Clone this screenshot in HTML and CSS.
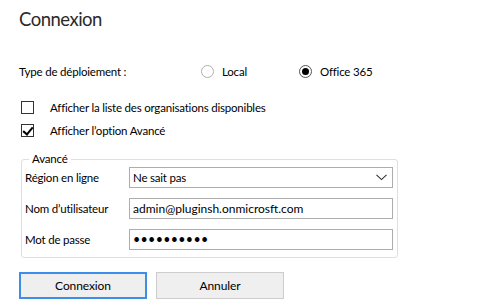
FILE: index.html
```html
<!DOCTYPE html>
<html lang="fr">
<head>
    <meta charset="UTF-8">
    <title>Connexion</title>
    <link rel="stylesheet" href="styles.css">
</head>
<body>
    <div class="dialog">
        <h1 class="title">Connexion</h1>

        <div class="deploy-row">
            <span class="deploy-label">Type de déploiement :</span>
            <label class="radio"><input type="radio" name="deploy"><span>Local</span></label>
            <label class="radio"><input type="radio" name="deploy" checked><span>Office 365</span></label>
        </div>

        <label class="check"><input type="checkbox"><span>Afficher la liste des organisations disponibles</span></label>
        <label class="check"><input type="checkbox" checked><span>Afficher l’option Avancé</span></label>

        <fieldset class="advanced">
            <legend>Avancé</legend>
            <div class="field">
                <label>Région en ligne</label>
                <div class="select-box">
                    <span>Ne sait pas</span>
                    <svg width="11" height="7" viewBox="0 0 11 7"><path d="M0.5 0.8 L5.5 5.6 L10.5 0.8" fill="none" stroke="#333" stroke-width="1.1"/></svg>
                </div>
            </div>
            <div class="field">
                <label>Nom d’utilisateur</label>
                <input type="text" class="user" value="admin@pluginsh.onmicrosft.com">
            </div>
            <div class="field">
                <label>Mot de passe</label>
                <input type="password" class="pass" value="aaaaaaaaaa">
            </div>
        </fieldset>

        <div class="button-group">
            <button class="btn btn-primary">Connexion</button>
            <button class="btn">Annuler</button>
        </div>
    </div>
</body>
</html>
```

FILE: styles.css
```css
* {
    margin: 0;
    padding: 0;
    box-sizing: border-box;
}

body {
    background: #ffffff;
    font-family: 'Lato', 'Noto Sans', sans-serif;
    font-size: 11.5px;
    letter-spacing: -0.2px;
    color: #000;
}

.dialog {
    padding: 7px 0 0 19px;
    width: 488px;
}

.title {
    font-size: 18.5px;
    font-weight: 400;
    letter-spacing: -0.5px;
    color: #2a2a2a;
    line-height: 24px;
    height: 24px;
}

.deploy-row {
    display: grid;
    grid-template-columns: 182px 98px auto;
    align-items: center;
    margin-top: 31px;
    height: 18px;
}

.radio, .check {
    display: flex;
    align-items: center;
    cursor: pointer;
}

.radio input {
    appearance: none;
    width: 13px;
    height: 13px;
    border: 1px solid #b0b0b0;
    border-radius: 50%;
    margin-right: 8px;
    display: grid;
    place-items: center;
    background: #fff;
}

.radio input:checked {
    border-color: #555;
}

.radio input:checked::after {
    content: '';
    width: 7px;
    height: 7px;
    border-radius: 50%;
    background: #000;
}

.check {
    height: 18px;
    margin-left: 2px;
}

.check:first-of-type {
    margin-top: 18px;
}

.check + .check {
    margin-top: 5px;
}

.check input {
    appearance: none;
    width: 13px;
    height: 13px;
    border: 1px solid #333;
    background: #fff;
    margin-right: 16px;
    position: relative;
}

.check input:checked::after {
    content: '';
    position: absolute;
    left: 3px;
    top: 0px;
    width: 4px;
    height: 8px;
    border: solid #000;
    border-width: 0 2px 2px 0;
    transform: rotate(40deg);
}

.advanced {
    margin: 13px 0 0 2px;
    width: 376px;
    border: 1px solid #d9e0e6;
    border-radius: 3px;
    padding: 1px 4px 7px 3px;
}

.advanced legend {
    margin-left: 4px;
    padding: 0 3px;
    color: #000;
    line-height: 14px;
}

.field {
    display: grid;
    grid-template-columns: 104px 264px;
    align-items: center;
    height: 21px;
}

.field + .field {
    margin-top: 10px;
}

.field label {
    white-space: nowrap;
}

.select-box, .field input {
    height: 21px;
    border: 1px solid #adadad;
    background: #fff;
    font-family: inherit;
    font-size: 11.5px;
    letter-spacing: -0.2px;
    padding: 0 3px;
    color: #000;
    outline: none;
}

.select-box {
    display: flex;
    align-items: center;
    justify-content: space-between;
    padding-right: 5px;
}

.field input.user {
    font-size: 12px;
    letter-spacing: 0;
}

.field input.pass {
    font-size: 12.5px;
    letter-spacing: 0.3px;
}

.button-group {
    display: flex;
    gap: 9px;
    margin-top: 14px;
}

.btn {
    width: 128px;
    height: 27px;
    border: 1px solid #cccccc;
    background: #efefef;
    font-family: inherit;
    font-size: 12px;
    letter-spacing: -0.1px;
    color: #000;
    cursor: pointer;
}

.btn-primary {
    border: 2px solid #3b8fe9;
}
```
